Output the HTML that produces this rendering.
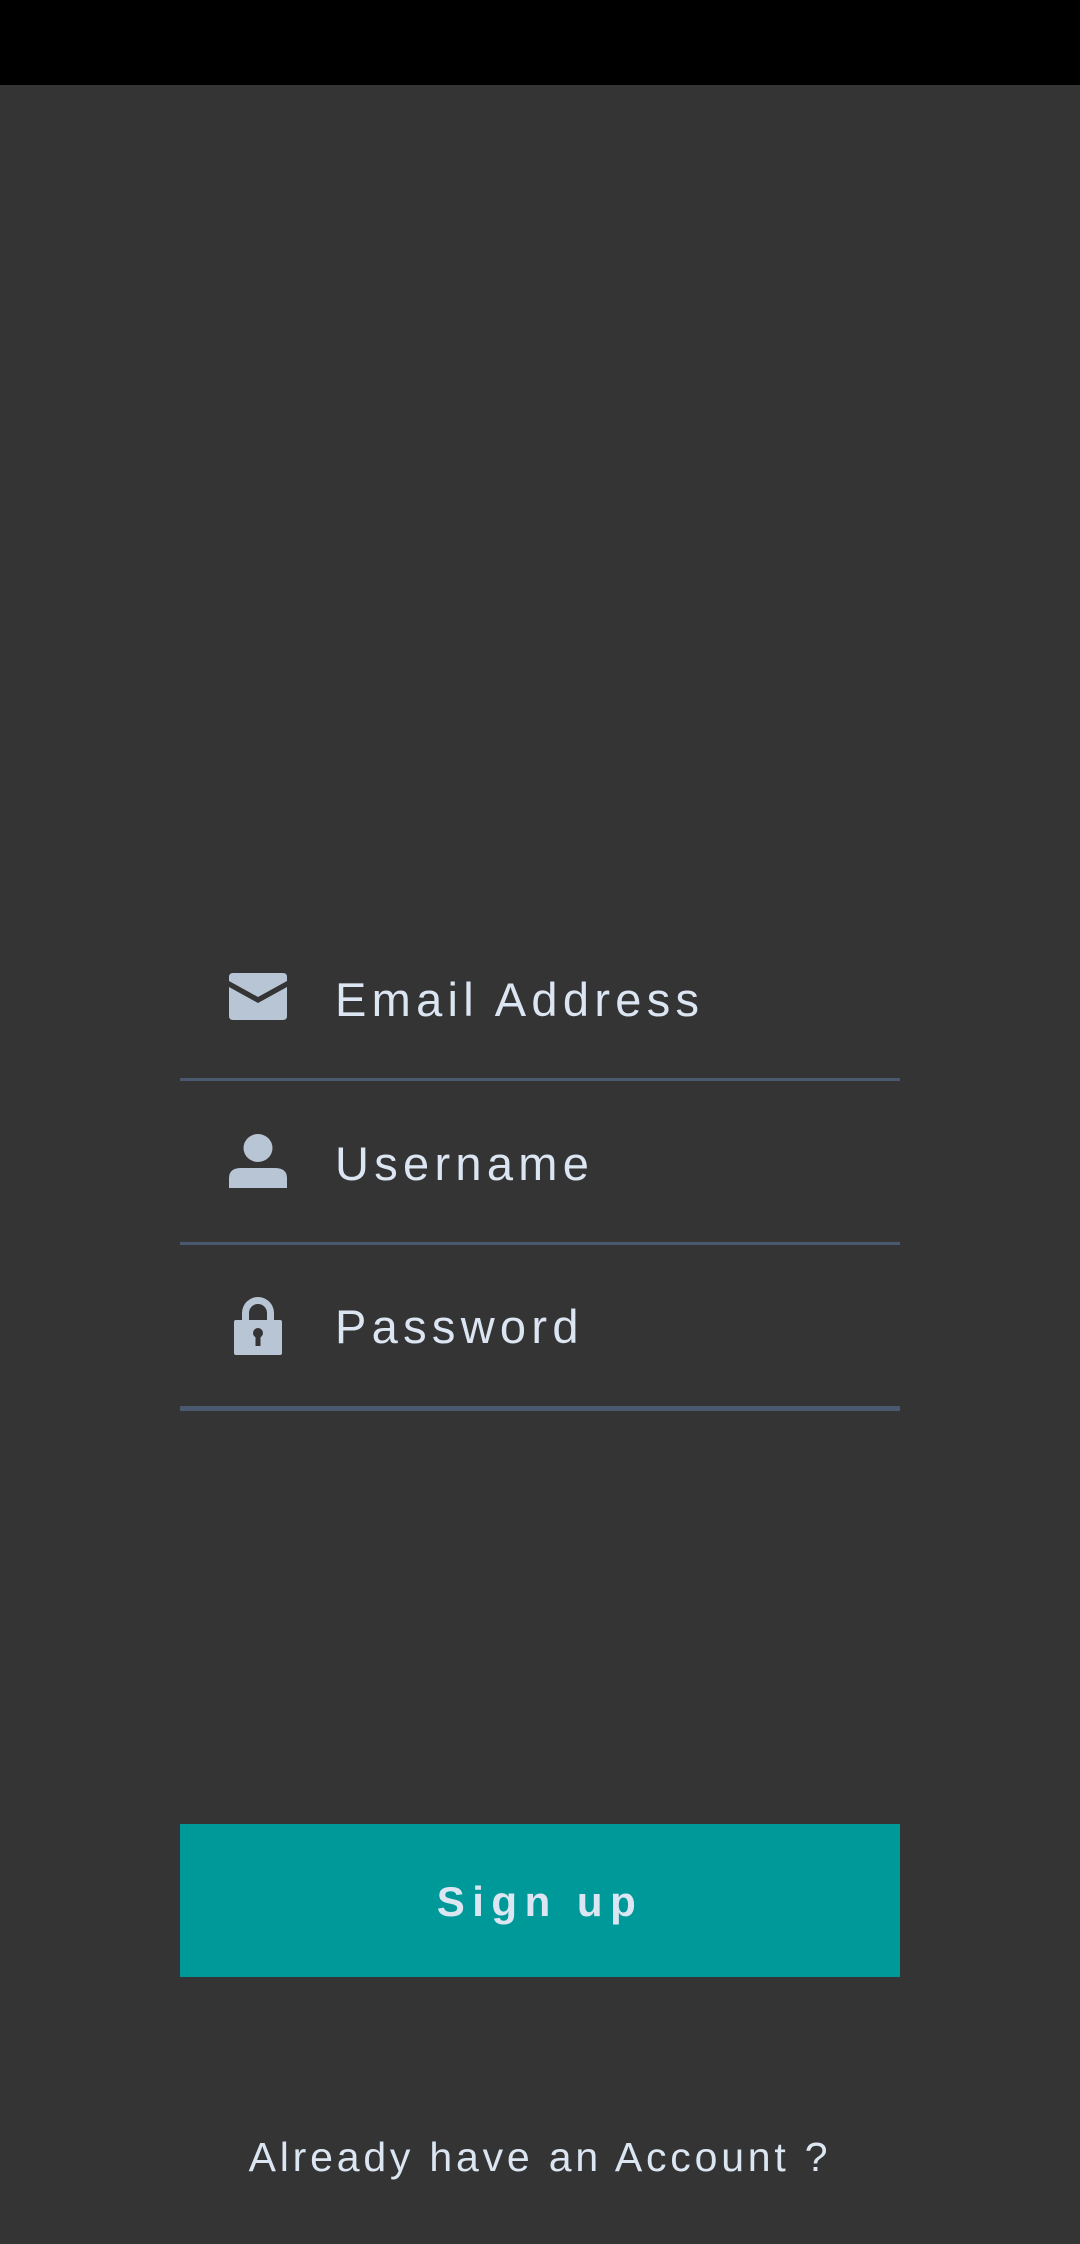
<!DOCTYPE html>
<html><head><meta charset="utf-8"><style>
html,body{margin:0;padding:0;}
body{width:1080px;height:2244px;background:#343434;position:relative;overflow:hidden;font-family:"Liberation Sans",sans-serif;}
.sb{position:absolute;left:0;top:0;width:1080px;height:85px;background:#000;}
.t{position:absolute;line-height:1;white-space:nowrap;color:#dce6f2;}
.f{font-size:47px;letter-spacing:5.3px;left:335px;}
.ln{position:absolute;left:180px;width:720px;background:#4a5870;}
svg{position:absolute;overflow:visible;}
</style></head><body>
<div class="sb"></div>

<svg style="left:229px;top:972px" width="58" height="49" viewBox="0 0 56 49" preserveAspectRatio="none">
<path d="M4 1H52Q56 1 56 5V9L28 25L0 9V5Q0 1 4 1Z" fill="#b7c5d4"/>
<path d="M0 15L28 31L56 15V44Q56 48 52 48H4Q0 48 0 44Z" fill="#b7c5d4"/>
</svg>
<div class="t f" style="top:976px">Email Address</div>
<div class="ln" style="top:1078px;height:3px"></div>

<svg style="left:229px;top:1134px" width="58" height="54" viewBox="0 0 56 54" preserveAspectRatio="none">
<circle cx="28" cy="14" r="14" fill="#b7c5d4"/>
<path d="M0 54V44Q0 34 12 34H44Q56 34 56 44V54Z" fill="#b7c5d4"/>
</svg>
<div class="t f" style="top:1140px">Username</div>
<div class="ln" style="top:1242px;height:3px"></div>

<svg style="left:234px;top:1295px" width="48" height="61" viewBox="0 0 48 61">
<path d="M8 26V18A16 16 0 0 1 40 18V26H33V18A9 9 0 0 0 15 18V26Z" fill="#b7c5d4"/>
<path d="M2 25H46Q48 25 48 27V58Q48 60 46 60H2Q0 60 0 58V27Q0 25 2 25Z" fill="#b7c5d4"/>
<circle cx="24" cy="38" r="5" fill="#343434"/>
<rect x="21.5" y="39" width="5" height="12" fill="#343434"/>
</svg>
<div class="t f" style="top:1303px">Password</div>
<div class="ln" style="top:1406px;height:5px"></div>

<div style="position:absolute;left:180px;top:1824px;width:720px;height:153px;background:#009999;"></div>
<div class="t" style="left:180px;width:720px;text-align:center;top:1881px;font-size:42px;font-weight:bold;letter-spacing:7.5px;">Sign up</div>

<div class="t" style="left:180px;width:720px;text-align:center;top:2137px;font-size:41px;letter-spacing:3.8px;">Already have an Account ?</div>
</body></html>
